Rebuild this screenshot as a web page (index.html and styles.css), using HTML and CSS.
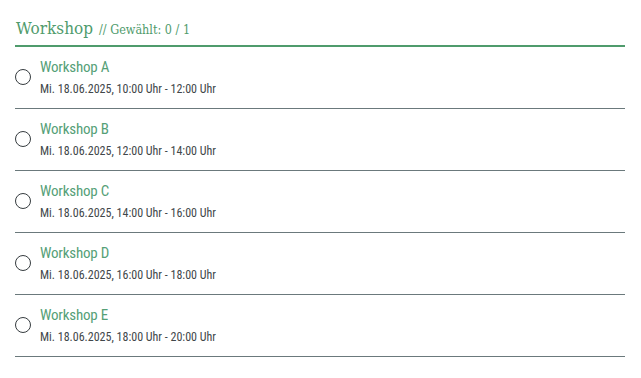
FILE: index.html
```html
<!DOCTYPE html>
<html lang="de">
<head>
<meta charset="utf-8">
<link rel="stylesheet" href="styles.css">
</head>
<body>
<section class="group">
  <h2 class="group-head"><span class="group-title">Workshop</span> <span class="group-count">// Gewählt: 0 / 1</span></h2>
  <ul class="options">
    <li class="option"><span class="radio"></span><div class="info"><div class="name">Workshop A</div><div class="date">Mi. 18.06.2025, 10:00 Uhr - 12:00 Uhr</div></div></li>
    <li class="option"><span class="radio"></span><div class="info"><div class="name">Workshop B</div><div class="date">Mi. 18.06.2025, 12:00 Uhr - 14:00 Uhr</div></div></li>
    <li class="option"><span class="radio"></span><div class="info"><div class="name">Workshop C</div><div class="date">Mi. 18.06.2025, 14:00 Uhr - 16:00 Uhr</div></div></li>
    <li class="option"><span class="radio"></span><div class="info"><div class="name">Workshop D</div><div class="date">Mi. 18.06.2025, 16:00 Uhr - 18:00 Uhr</div></div></li>
    <li class="option"><span class="radio"></span><div class="info"><div class="name">Workshop E</div><div class="date">Mi. 18.06.2025, 18:00 Uhr - 20:00 Uhr</div></div></li>
  </ul>
</section>
</body>
</html>
```
FILE: styles.css
```css
html, body { margin: 0; padding: 0; background: #fff; }
body { font-family: Roboto, "Liberation Sans", sans-serif; }
.group { padding: 14px 16px 0 15px; }
.group-head {
  margin: 0;
  padding: 0 0 3px 1px;
  border-bottom: 2px solid #4f9b6c;
  font-weight: normal;
  color: #4f9b6c;
  line-height: 24px;
}
.group-title { font-family: "DejaVu Serif Condensed", "DejaVu Serif", serif; font-size: 17px; }
.group-count { font-family: "DejaVu Serif Condensed", "DejaVu Serif", serif; font-size: 12.5px; }
.options { list-style: none; margin: 0; padding: 0; }
.option {
  display: flex;
  align-items: flex-start;
  height: 61px;
  border-bottom: 1px solid #6b797c;
}
.radio {
  box-sizing: border-box;
  width: 16px; height: 16px;
  border: 1.8px solid #363c3f;
  border-radius: 50%;
  margin: 22px 9px 0 0;
  flex: none;
}
.info { display: flex; flex-direction: column; gap: 6px; padding-top: 11px; }
.name { font-size: 15px; color: #55a077; letter-spacing: -0.2px; font-stretch: condensed; line-height: 18px; }
.date { font-size: 12px; color: #41474a; letter-spacing: 0; font-stretch: condensed; line-height: 15px; }
```
